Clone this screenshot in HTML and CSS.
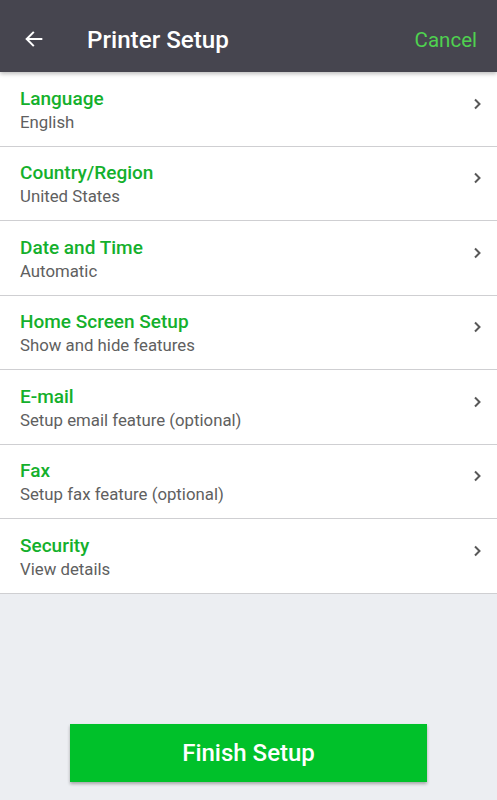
FILE: index.html
```html
<!DOCTYPE html>
<html lang="en">
<head>
<meta charset="utf-8">
<title>Printer Setup</title>
<link rel="stylesheet" href="styles.css">
</head>
<body>
<div class="app">
  <header class="topbar">
    <svg class="back" width="22" height="22" viewBox="0 0 24 24"><path d="M20 12H5M11 5l-7 7 7 7" fill="none" stroke="#fff" stroke-width="2.2" stroke-linecap="square"/></svg>
    <h1 class="title">Printer Setup</h1>
    <span class="cancel">Cancel</span>
  </header>
  <ul class="list">
    <li class="row"><div class="text"><div class="label">Language</div><div class="sub">English</div></div><svg class="chev" width="10" height="12" viewBox="0 0 10 12"><path d="M3 1.5l4.5 4.5-4.5 4.5" fill="none" stroke="#585858" stroke-width="2"/></svg></li>
    <li class="row"><div class="text"><div class="label">Country/Region</div><div class="sub">United States</div></div><svg class="chev" width="10" height="12" viewBox="0 0 10 12"><path d="M3 1.5l4.5 4.5-4.5 4.5" fill="none" stroke="#585858" stroke-width="2"/></svg></li>
    <li class="row"><div class="text"><div class="label">Date and Time</div><div class="sub">Automatic</div></div><svg class="chev" width="10" height="12" viewBox="0 0 10 12"><path d="M3 1.5l4.5 4.5-4.5 4.5" fill="none" stroke="#585858" stroke-width="2"/></svg></li>
    <li class="row"><div class="text"><div class="label">Home Screen Setup</div><div class="sub">Show and hide features</div></div><svg class="chev" width="10" height="12" viewBox="0 0 10 12"><path d="M3 1.5l4.5 4.5-4.5 4.5" fill="none" stroke="#585858" stroke-width="2"/></svg></li>
    <li class="row"><div class="text"><div class="label">E-mail</div><div class="sub">Setup email feature (optional)</div></div><svg class="chev" width="10" height="12" viewBox="0 0 10 12"><path d="M3 1.5l4.5 4.5-4.5 4.5" fill="none" stroke="#585858" stroke-width="2"/></svg></li>
    <li class="row"><div class="text"><div class="label">Fax</div><div class="sub">Setup fax feature (optional)</div></div><svg class="chev" width="10" height="12" viewBox="0 0 10 12"><path d="M3 1.5l4.5 4.5-4.5 4.5" fill="none" stroke="#585858" stroke-width="2"/></svg></li>
    <li class="row"><div class="text"><div class="label">Security</div><div class="sub">View details</div></div><svg class="chev" width="10" height="12" viewBox="0 0 10 12"><path d="M3 1.5l4.5 4.5-4.5 4.5" fill="none" stroke="#585858" stroke-width="2"/></svg></li>
  </ul>
  <div class="footer">
    <button class="finish">Finish Setup</button>
  </div>
</div>
</body>
</html>
```
FILE: styles.css
```css
* { box-sizing: border-box; }
html, body { margin: 0; padding: 0; }
body {
  font-family: Roboto, "Liberation Sans", sans-serif;
  background: #eceef2;
  width: 497px;
  height: 800px;
  overflow: hidden;
}
.app {
  display: flex;
  flex-direction: column;
  height: 800px;
}
.topbar {
  height: 72px;
  background: #46454f;
  display: flex;
  align-items: center;
  padding: 7px 20px 0 23px;
  box-shadow: 0 2px 4px rgba(0,0,0,0.25);
  position: relative;
  z-index: 1;
}
.back { display: block; margin-top: -1px; }
.title {
  margin: 0 0 0 42px;
  font-size: 24.2px;
  font-weight: 500;
  color: #ffffff;
  flex: 1;
}
.cancel {
  font-size: 20.5px;
  color: #4fd14f;
}
.list {
  list-style: none;
  margin: 0;
  padding: 0;
  background: #ffffff;
}
.row {
  height: 74.5px;
  border-bottom: 1.5px solid #cfcfd2;
  display: flex;
  align-items: flex-start;
  padding: 14.5px 15px 0 20px;
}
.text { flex: 1; }
.label {
  font-size: 19px;
  font-weight: 500;
  color: #14b02c;
  line-height: 24px;
}
.sub {
  font-size: 16.8px;
  color: #606060;
  line-height: 22px;
}
.chev { display: block; margin-top: 11px; }
.footer {
  flex: 1;
  display: flex;
  align-items: flex-end;
  justify-content: center;
  padding-bottom: 18px;
}
.finish {
  width: 357px;
  height: 58px;
  border: none;
  background: #00c12a;
  color: #ffffff;
  font-family: Roboto, "Liberation Sans", sans-serif;
  font-size: 24px;
  font-weight: 500;
  box-shadow: 0 2px 3px rgba(0,0,0,0.3);
}
```
